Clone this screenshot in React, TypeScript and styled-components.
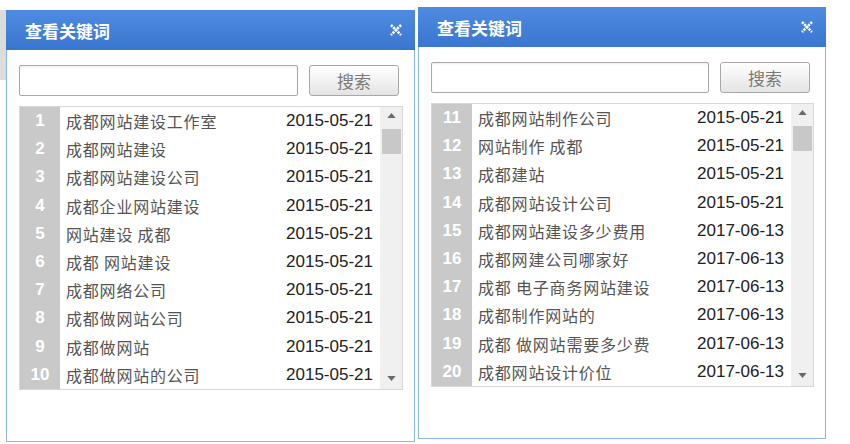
import React from 'react';
import styled, { createGlobalStyle } from 'styled-components';

const GlobalStyle = createGlobalStyle`
  html, body {
    margin: 0;
    padding: 0;
    background: #ffffff;
  }
  body {
    font-family: 'Liberation Sans', 'Noto Sans CJK SC', sans-serif;
  }
`;

type Keyword = { no: number; word: string; date: string };

const leftList: Keyword[] = [
  { no: 1, word: '成都网站建设工作室', date: '2015-05-21' },
  { no: 2, word: '成都网站建设', date: '2015-05-21' },
  { no: 3, word: '成都网站建设公司', date: '2015-05-21' },
  { no: 4, word: '成都企业网站建设', date: '2015-05-21' },
  { no: 5, word: '网站建设 成都', date: '2015-05-21' },
  { no: 6, word: '成都 网站建设', date: '2015-05-21' },
  { no: 7, word: '成都网络公司', date: '2015-05-21' },
  { no: 8, word: '成都做网站公司', date: '2015-05-21' },
  { no: 9, word: '成都做网站', date: '2015-05-21' },
  { no: 10, word: '成都做网站的公司', date: '2015-05-21' },
];

const rightList: Keyword[] = [
  { no: 11, word: '成都网站制作公司', date: '2015-05-21' },
  { no: 12, word: '网站制作 成都', date: '2015-05-21' },
  { no: 13, word: '成都建站', date: '2015-05-21' },
  { no: 14, word: '成都网站设计公司', date: '2015-05-21' },
  { no: 15, word: '成都网站建设多少费用', date: '2017-06-13' },
  { no: 16, word: '成都网建公司哪家好', date: '2017-06-13' },
  { no: 17, word: '成都 电子商务网站建设', date: '2017-06-13' },
  { no: 18, word: '成都制作网站的', date: '2017-06-13' },
  { no: 19, word: '成都 做网站需要多少费', date: '2017-06-13' },
  { no: 20, word: '成都网站设计价位', date: '2017-06-13' },
];

export default function App() {
  return (
    <>
      <GlobalStyle />
      <Page>
        <SideStrip />
        <KeywordDialog top={10} width={409} items={leftList} />
        <KeywordDialog top={7} width={408} items={rightList} gapLeft={3} />
      </Page>
    </>
  );
}

function KeywordDialog({
  top,
  width,
  items,
  gapLeft = 0,
}: {
  top: number;
  width: number;
  items: Keyword[];
  gapLeft?: number;
}) {
  return (
    <Dialog $top={top} $width={width} $gapLeft={gapLeft}>
      <TitleBar>
        <Title>查看关键词</Title>
        <CloseIcon viewBox="0 0 14 14">
          <path d="M2 2 L12 12 M12 2 L2 12" />
        </CloseIcon>
      </TitleBar>
      <Body>
        <SearchRow>
          <SearchInput />
          <SearchButton>搜索</SearchButton>
        </SearchRow>
        <ListBox>
          <Rows>
            {items.map((k) => (
              <Row key={k.no}>
                <Num>{k.no}</Num>
                <Word>{k.word}</Word>
                <DateCell>{k.date}</DateCell>
              </Row>
            ))}
          </Rows>
          <ScrollBar>
            <Arrow viewBox="0 0 10 6">
              <path d="M0 6 L5 0 L10 6 Z" />
            </Arrow>
            <Thumb />
            <Spacer />
            <Arrow viewBox="0 0 10 6">
              <path d="M0 0 L5 6 L10 0 Z" />
            </Arrow>
          </ScrollBar>
        </ListBox>
      </Body>
    </Dialog>
  );
}

const Page = styled.div`
  display: flex;
  align-items: flex-start;
  width: 850px;
  height: 444px;
  overflow: hidden;
`;

const SideStrip = styled.div`
  width: 6px;
  height: 70px;
  margin-top: 10px;
  background: #dcdcdc;
  flex-shrink: 0;
`;

const Dialog = styled.div<{ $top: number; $width: number; $gapLeft: number }>`
  margin-top: ${(p) => p.$top}px;
  margin-left: ${(p) => p.$gapLeft}px;
  width: ${(p) => p.$width}px;
  height: 432px;
  box-sizing: border-box;
  border: 1px solid #8fb6ea;
  border-top: none;
  background: #ffffff;
  display: flex;
  flex-direction: column;
  flex-shrink: 0;
`;

const TitleBar = styled.div`
  height: 40px;
  margin: 0 -1px;
  padding: 0 12px 0 19px;
  display: flex;
  align-items: center;
  justify-content: space-between;
  background: linear-gradient(#4f8be0, #3a76cf);
`;

const Title = styled.span`
  color: #ffffff;
  font-family: 'Noto Sans CJK SC', serif;
  font-weight: 700;
  font-size: 17px;
`;

const CloseIcon = styled.svg`
  width: 14px;
  height: 14px;
  stroke: #ffffff;
  stroke-width: 2.6;
  stroke-dasharray: 2.2 1;
  fill: none;
`;

const Body = styled.div`
  padding: 15px 11px 0 12px;
  display: flex;
  flex-direction: column;
`;

const SearchRow = styled.div`
  display: flex;
  gap: 11px;
  height: 31px;
  margin-right: 4px;
`;

const SearchInput = styled.input`
  flex: 1;
  box-sizing: border-box;
  height: 31px;
  border: 1px solid #a9a9a9;
  border-radius: 2px;
  box-shadow: inset 0 1px 2px rgba(0, 0, 0, 0.08);
  outline: none;
`;

const SearchButton = styled.button`
  width: 90px;
  height: 31px;
  box-sizing: border-box;
  border: 1px solid #a8a8a8;
  border-radius: 3px;
  background: linear-gradient(#ffffff, #e4e4e4);
  color: #7a7a7a;
  font-family: 'Noto Sans CJK SC', serif;
  font-size: 17px;
  padding: 0;
`;

const ListBox = styled.div`
  margin-top: 10px;
  display: flex;
  border: 1px solid #d8d8d8;
  height: 284px;
  box-sizing: border-box;
`;

const Rows = styled.div`
  flex: 1;
  display: flex;
  flex-direction: column;
  background: linear-gradient(to right, #c9c9c9 40px, #ffffff 40px);
`;

const Row = styled.div`
  height: 28.2px;
  display: grid;
  grid-template-columns: 40px 1fr auto;
  align-items: center;
`;

const Num = styled.span`
  text-align: center;
  color: #ffffff;
  font-weight: 700;
  font-size: 17px;
`;

const Word = styled.span`
  padding-left: 6px;
  color: #555555;
  font-family: 'Noto Sans CJK SC', serif;
  font-size: 16px;
  letter-spacing: 0.8px;
  white-space: nowrap;
`;

const DateCell = styled.span`
  padding-right: 7px;
  color: #222222;
  font-size: 17px;
`;

const ScrollBar = styled.div`
  width: 22px;
  background: #f0f0f0;
  display: flex;
  flex-direction: column;
  align-items: center;
  padding: 6px 0 8px;
  box-sizing: border-box;
`;

const Arrow = styled.svg`
  width: 9px;
  height: 5px;
  fill: #6a6a6a;
`;

const Thumb = styled.div`
  margin-top: 11px;
  width: 19px;
  height: 25px;
  background: #c8c8c8;
`;

const Spacer = styled.div`
  flex: 1;
`;
